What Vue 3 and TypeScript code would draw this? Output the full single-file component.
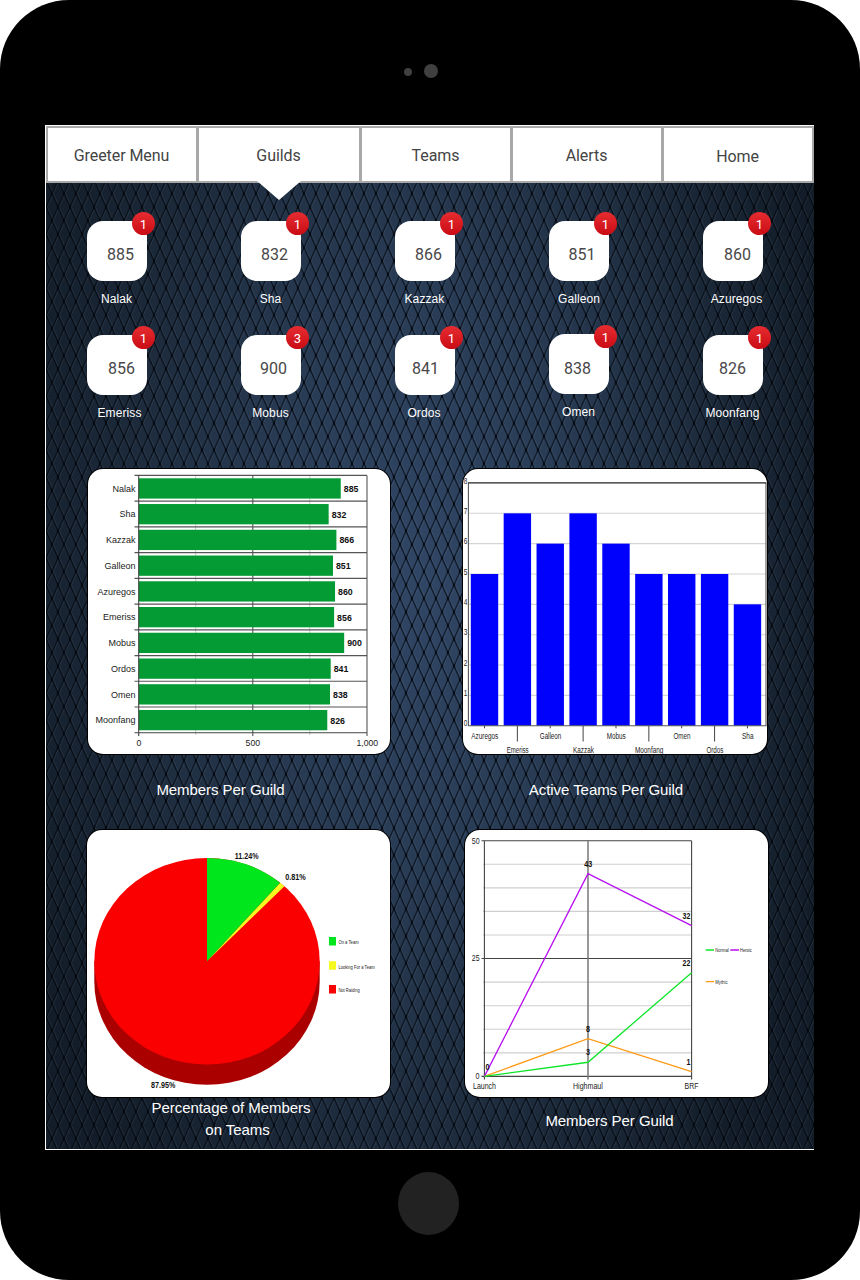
<script setup lang="ts">
interface Tab { label: string; active?: boolean; drop?: boolean }
interface Guild {
  name: string
  members: number
  alerts: number
  numberShift: number
  nameShift: number
  raised?: boolean
}

const tabs: Tab[] = [
  { label: 'Greeter Menu' },
  { label: 'Guilds', active: true },
  { label: 'Teams' },
  { label: 'Alerts' },
  { label: 'Home', drop: true },
]

const guilds: Guild[] = [
  { name: 'Nalak', members: 885, alerts: 1, numberShift: 3.5, nameShift: -0.5 },
  { name: 'Sha', members: 832, alerts: 1, numberShift: 3.5, nameShift: -0.5 },
  { name: 'Kazzak', members: 866, alerts: 1, numberShift: 3.5, nameShift: -0.5 },
  { name: 'Galleon', members: 851, alerts: 1, numberShift: 3, nameShift: 0 },
  { name: 'Azuregos', members: 860, alerts: 1, numberShift: 4.5, nameShift: 3.5 },
  { name: 'Emeriss', members: 856, alerts: 1, numberShift: 4.5, nameShift: 2.5 },
  { name: 'Mobus', members: 900, alerts: 3, numberShift: 2.5, nameShift: -0.5 },
  { name: 'Ordos', members: 841, alerts: 1, numberShift: 0.5, nameShift: -1 },
  { name: 'Omen', members: 838, alerts: 1, numberShift: -1.5, nameShift: -0.5, raised: true },
  { name: 'Moonfang', members: 826, alerts: 1, numberShift: -0.5, nameShift: -0.5 },
]

// Horizontal bar chart
const rowStep = 25.74
const barTop = 475.4
const barX0 = 138.7
const memberX = (v: number) => barX0 + v * 0.2283

// Column chart
const teams = [
  { name: 'Azuregos', count: 5, width: 27 },
  { name: 'Emeriss', count: 7, width: 22 },
  { name: 'Galleon', count: 6, width: 21.5 },
  { name: 'Kazzak', count: 7, width: 21 },
  { name: 'Mobus', count: 6, width: 19 },
  { name: 'Moonfang', count: 5, width: 28.5 },
  { name: 'Omen', count: 5, width: 17 },
  { name: 'Ordos', count: 5, width: 17 },
  { name: 'Sha', count: 4, width: 11.5 },
]
const teamY = (v: number) => 725.7 - v * 30.34
const teamX = (i: number) => 470.8 + i * 32.87

// Pie chart
const legend = [
  { name: 'On a Team', color: '#00e61c', width: 20.3, y: 937 },
  { name: 'Looking For a Team', color: '#f4fa20', width: 36.3, y: 961.2 },
  { name: 'Not Raiding', color: '#fb0000', width: 21.3, y: 985 },
]

// Line chart
const lineX = [484.4, 588, 691.6]
const lineY = (v: number) => 1076.4 - v * 4.714
const series = [
  { name: 'Mythic', color: '#ff9a14', values: [0, 8, 1] },
  { name: 'Heroic', color: '#b80cf0', values: [0, 43, 32] },
  { name: 'Normal', color: '#0ee52a', values: [0, 3, 22] },
]
const points = (values: number[]) => values.map((v, i) => `${lineX[i]},${lineY(v)}`).join(' ')
const minorLines = [5, 10, 15, 20, 30, 35, 40, 45]
const pointLabels = [
  { text: '43', x: 588.2, y: 866.8, w: 8 },
  { text: '32', x: 686.5, y: 919, w: 7.8 },
  { text: '22', x: 686.5, y: 966, w: 7.8 },
  { text: '8', x: 588, y: 1032, w: 4 },
  { text: '3', x: 588, y: 1055, w: 4 },
  { text: '1', x: 688.6, y: 1065.3, w: 4 },
  { text: '0', x: 487.5, y: 1070, w: 4 },
]
</script>

<template>
  <div class="device">
    <header class="bezel-top">
      <span class="sensor"></span>
      <span class="camera"></span>
    </header>

    <main class="screen">
      <svg class="texture" width="768" height="1023" aria-hidden="true">
        <defs>
          <radialGradient id="glow" gradientUnits="userSpaceOnUse" cx="0" cy="0" r="1"
            gradientTransform="translate(375 450) scale(420 820)">
            <stop offset="0" stop-color="#304665" />
            <stop offset="0.35" stop-color="#293c55" />
            <stop offset="0.75" stop-color="#1b2838" />
            <stop offset="1" stop-color="#131d29" />
          </radialGradient>
          <pattern id="weave" width="12" height="27" patternUnits="userSpaceOnUse">
            <g fill="none" stroke="#9fb8d8" stroke-opacity=".09" stroke-width="1">
              <path d="M1.4 0L7.4 13.5L1.4 27" />
              <path d="M13.4 0L7.4 13.5L13.4 27" />
            </g>
            <g fill="none" stroke="#02060d" stroke-width="1.4">
              <path d="M-1 -2.25L13 29.25M-1 24.75L1 29.25M11 -2.25L13 2.25" stroke-opacity=".66" />
              <path d="M13 -2.25L-1 29.25M13 24.75L11 29.25M1 -2.25L-1 2.25" stroke-opacity=".6" />
            </g>
            <g fill="#01040a" opacity=".6">
              <ellipse cx="6" cy="13.5" rx="1.3" ry="2" />
              <ellipse cx="0" cy="0" rx="1.3" ry="2" />
              <ellipse cx="12" cy="0" rx="1.3" ry="2" />
              <ellipse cx="0" cy="27" rx="1.3" ry="2" />
              <ellipse cx="12" cy="27" rx="1.3" ry="2" />
            </g>
          </pattern>
        </defs>
        <rect width="768" height="1023" fill="url(#glow)" />
        <rect width="768" height="1023" fill="url(#weave)" />
      </svg>

      <nav class="tabs">
        <a v-for="t in tabs" :key="t.label" class="tab" :class="{ active: t.active, drop: t.drop }">{{ t.label }}</a>
      </nav>

      <section class="guilds">
        <div v-for="g in guilds" :key="g.name" class="guild" :class="{ raised: g.raised }">
          <div class="tile">
            <span class="members" :style="{ transform: `translateX(${g.numberShift}px)` }">{{ g.members }}</span>
            <span class="badge">{{ g.alerts }}</span>
          </div>
          <span class="guild-name" :style="{ transform: `translateX(${g.nameShift}px)` }">{{ g.name }}</span>
        </div>
      </section>

      <section class="charts">
        <div class="row row-one">
          <figure class="members-chart">
            <svg class="card" width="302" height="285" viewBox="88 469 302 285">
              <g stroke="#c9c9c9" stroke-width="1">
                <path d="M195.7 475.4V735M309.8 475.4V735" />
              </g>
              <path d="M252.8 475.4V736M367 475.4V736" stroke="#555" stroke-width="1.1" />
              <g v-for="(g, i) in guilds" :key="g.name">
                <path :d="`M134.5 ${barTop + i * rowStep}H367`" stroke="#555" stroke-width="1.1" />
                <rect :x="barX0" :y="barTop + i * rowStep + 2.9" :width="memberX(g.members) - barX0" height="20.3" fill="#049a34" />
                <text class="ink" x="135.5" :y="barTop + i * rowStep + 16.3" font-size="9" text-anchor="end">{{ g.name }}</text>
                <text class="bold" :x="memberX(g.members) + 3" :y="barTop + i * rowStep + 16.6" font-size="8.8">{{ g.members }}</text>
              </g>
              <path d="M134.5 732.8H367M138.7 475.4V736" stroke="#444" stroke-width="1.1" fill="none" />
              <g class="ink" font-size="8.7" text-anchor="middle">
                <text x="138.8" y="745.5">0</text>
                <text x="252.8" y="745.5">500</text>
                <text x="367.3" y="745.5">1,000</text>
              </g>
            </svg>
            <figcaption>Members Per Guild</figcaption>
          </figure>

          <figure class="teams-chart">
            <svg class="card" width="304" height="285" viewBox="463 469 304 285">
              <path v-for="n in 7" :key="n" :d="`M468 ${teamY(n)}H766`" stroke="#d4d4d4" stroke-width="1.1" />
              <text v-for="n in 9" :key="'l' + n" class="ink" x="463.7" :y="teamY(n - 1) + 0.6" font-size="8.5"
                textLength="3.6" lengthAdjust="spacingAndGlyphs">{{ n - 1 }}</text>
              <g v-for="(t, i) in teams" :key="t.name">
                <rect :x="teamX(i)" :y="teamY(t.count)" width="27.4" :height="teamY(0) - teamY(t.count)" fill="#0000fd" />
                <path :d="`M${teamX(i) + 13.7} 726V${i % 2 ? 741.5 : 728.3}`" stroke="#444" stroke-width="1" />
                <text class="ink" :x="teamX(i) + 14 - t.width / 2" :y="i % 2 ? 752.8 : 739.4" font-size="8.3"
                  :textLength="t.width" lengthAdjust="spacingAndGlyphs">{{ t.name }}</text>
              </g>
              <path d="M468.4 483V725.8H766V483" fill="none" stroke="#555" stroke-width="1.1" />
              <path d="M468 482.9H766.3" stroke="#222" stroke-width="1.3" />
            </svg>
            <figcaption>Active Teams Per Guild</figcaption>
          </figure>
        </div>

        <div class="row row-two">
          <figure class="pie-chart">
            <svg class="card" width="303" height="267" viewBox="87 830 303 267">
              <path d="M94.3 961.3V981.5A112.7 103.3 0 0 0 319.7 981.5V961.3Z" fill="#ab0000" />
              <ellipse cx="207" cy="961.3" rx="112.7" ry="103.3" fill="#fb0000" />
              <path d="M207 961.3L280.1 882.7A112.7 103.3 0 0 1 284.4 886.2Z" fill="#f4fa20" />
              <path d="M207 961.3V858A112.7 103.3 0 0 1 280.1 882.7Z" fill="#00e61c" />
              <g class="bold" font-size="8.4">
                <text x="234.7" y="859" textLength="23.8" lengthAdjust="spacingAndGlyphs">11.24%</text>
                <text x="285.2" y="879.6" textLength="20.6" lengthAdjust="spacingAndGlyphs">0.81%</text>
                <text x="151" y="1088.3" textLength="24.3" lengthAdjust="spacingAndGlyphs">87.95%</text>
              </g>
              <g v-for="l in legend" :key="l.name">
                <rect x="329" :y="l.y" width="7" height="8.5" :fill="l.color" />
                <text class="ink" x="338.4" :y="l.y + 7.3" font-size="5" :textLength="l.width" lengthAdjust="spacingAndGlyphs">{{ l.name }}</text>
              </g>
            </svg>
            <figcaption><span>Percentage of Members</span><span class="second">on Teams</span></figcaption>
          </figure>

          <figure class="progress-chart">
            <svg class="card" width="303" height="267" viewBox="465 830 303 267">
              <path v-for="m in minorLines" :key="m" :d="`M483 ${lineY(m)}H691.6`" stroke="#cfcfcf" stroke-width="1.1" />
              <path d="M481.5 840.7H691.6M481.5 958.5H691.6M481.5 1076.4H691.6M484.4 840.7V1079.5M691.6 840.7V1079.5" fill="none" stroke="#444" stroke-width="1.1" />
              <path d="M588 840.7V1079.5" stroke="#777" stroke-width="1.5" />
              <polyline v-for="s in series" :key="s.name" :points="points(s.values)" fill="none" :stroke="s.color" stroke-width="1.3" />
              <text v-for="p in pointLabels" :key="p.text" class="bold" :x="p.x - p.w / 2" :y="p.y" font-size="8.3"
                :textLength="p.w" lengthAdjust="spacingAndGlyphs">{{ p.text }}</text>
              <g class="ink" font-size="8.3">
                <text x="471.8" y="843.6" textLength="7.8" lengthAdjust="spacingAndGlyphs">50</text>
                <text x="471.8" y="961.4" textLength="7.8" lengthAdjust="spacingAndGlyphs">25</text>
                <text x="475.6" y="1079.3" textLength="4" lengthAdjust="spacingAndGlyphs">0</text>
                <text x="473" y="1089.2" textLength="23" lengthAdjust="spacingAndGlyphs">Launch</text>
                <text x="573" y="1089.2" textLength="29.8" lengthAdjust="spacingAndGlyphs">Highmaul</text>
                <text x="684.5" y="1089.2" textLength="14" lengthAdjust="spacingAndGlyphs">BRF</text>
              </g>
              <g stroke-width="1.3">
                <path d="M705.7 950H714" stroke="#0ee52a" />
                <path d="M730.3 950H739" stroke="#b80cf0" />
                <path d="M705.7 981.6H714" stroke="#ff9a14" />
              </g>
              <g class="ink" font-size="4.6">
                <text x="715.3" y="952.1" textLength="13.3" lengthAdjust="spacingAndGlyphs">Normal</text>
                <text x="740" y="952.1" textLength="11.8" lengthAdjust="spacingAndGlyphs">Heroic</text>
                <text x="715.3" y="983.8" textLength="12.2" lengthAdjust="spacingAndGlyphs">Mythic</text>
              </g>
            </svg>
            <figcaption>Members Per Guild</figcaption>
          </figure>
        </div>
      </section>
    </main>

    <footer class="bezel-bottom"><span class="home-button"></span></footer>
  </div>
</template>

<style>
body { background: #fff; }
</style>

<style scoped>
.device {
  width: 860px;
  height: 1280px;
  box-sizing: border-box;
  background: #000;
  border-radius: 69px;
  overflow: hidden;
  font-family: "Liberation Sans", Arial, sans-serif;
}
.bezel-top {
  height: 125px;
  display: flex;
  gap: 12px;
  padding-left: 404px;
  box-sizing: border-box;
}
.sensor, .camera { background: #404040; border-radius: 50%; }
.sensor { width: 8px; height: 8px; margin-top: 68px; }
.camera { width: 14px; height: 14px; margin-top: 64px; }
.bezel-bottom { display: flex; padding: 22px 0 0 398px; }
.home-button { width: 61px; height: 63px; border-radius: 50%; background: #222; }
.screen {
  position: relative;
  width: 768px;
  height: 1023px;
  margin-left: 45px;
  border: 1px solid #fff;
  border-right: 0;
  overflow: hidden;
}
.texture { position: absolute; inset: 0; }
.tabs {
  position: relative;
  display: grid;
  grid-template-columns: 148px 160px 148px 148px 148px;
  gap: 3px;
  padding: 2px;
  height: 57px;
  box-sizing: border-box;
  background: #a8a8a8;
}
.tab {
  position: relative;
  background: #fff;
  display: flex;
  align-items: center;
  justify-content: center;
  padding: 2px 1px 0 0;
  font: 16px Roboto, sans-serif;
  letter-spacing: -0.08px;
  color: #444;
}
.tab.drop { padding-top: 4px; }
.tab.active::after {
  content: "";
  position: absolute;
  left: 58px;
  top: 53px;
  width: 44px;
  height: 19px;
  background: #fff;
  clip-path: polygon(0 0, 100% 0, 50% 100%);
}
.guilds {
  position: relative;
  display: grid;
  grid-template-columns: repeat(5, 60px);
  grid-auto-rows: 114px;
  column-gap: 94px;
  padding: 38px 0 0 41px;
}
.guild { display: flex; flex-direction: column; align-items: center; }
.guild.raised { margin-top: -1px; }
.tile {
  position: relative;
  width: 60px;
  height: 60px;
  border-radius: 16px;
  background: #fff;
  display: flex;
  align-items: center;
  justify-content: center;
}
.members { font: 16px/20px Roboto, sans-serif; color: #484848; padding-top: 7px; }
.guild.raised .members { padding-top: 9px; }
.badge {
  position: absolute;
  top: -9px;
  left: 45px;
  width: 23px;
  height: 23px;
  border-radius: 50%;
  background: linear-gradient(#e62c31, #ca0c14);
  color: #fff;
  font: 13px/25px Roboto, sans-serif;
  text-align: center;
}
.guild-name {
  color: #fff;
  font-size: 12px;
  line-height: 14px;
  letter-spacing: 0.1px;
  margin-top: 11px;
  white-space: nowrap;
}
.charts { position: relative; padding-top: 20px; }
.row { display: flex; }
.row-one { height: 361px; padding-left: 42px; gap: 73px; }
.row-two { padding-left: 41px; gap: 75px; }
figure { margin: 0; }
.card {
  display: block;
  background: #fff;
  border-radius: 15px;
  box-shadow: 0 0 0 1px #000;
}
figcaption {
  color: #fff;
  font-size: 15px;
  line-height: 22px;
  letter-spacing: -0.06px;
  text-align: center;
  padding-top: 25px;
}
.members-chart figcaption { padding-right: 37px; }
.teams-chart figcaption { padding-right: 18px; }
.progress-chart figcaption { padding: 13px 14px 0 0; }
.pie-chart figcaption { display: flex; flex-direction: column; padding: 0 15px 0 0; }
.second { padding-left: 13px; }
svg text { font-family: "Liberation Sans", Arial, sans-serif; }
.ink { fill: #222; }
.bold { fill: #111; font-weight: 700; }
</style>
